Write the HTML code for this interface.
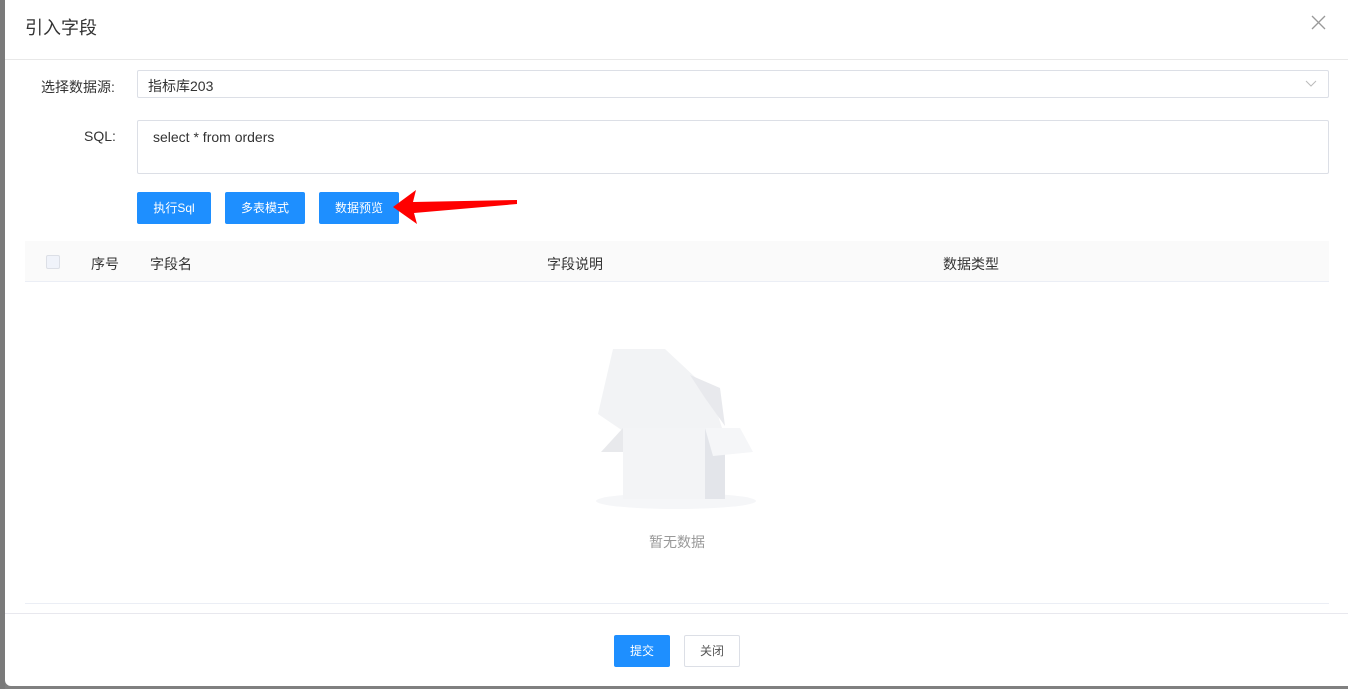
<!DOCTYPE html>
<html><head><meta charset="utf-8"><style>
*{box-sizing:border-box;margin:0;padding:0}
body{width:1348px;height:689px;background:#808080;position:relative;overflow:hidden;font-family:"Liberation Sans","Noto Sans CJK SC",sans-serif;font-size:14px;color:#333}
.modal{position:absolute;left:5px;top:-6px;width:1350px;height:692px;background:#fff;border-radius:6px}
.a{position:absolute}
.btn{position:absolute;height:32px;background:#1e8fff;color:#fff;font-size:12px;text-align:center;line-height:32px;border-radius:2px}
</style></head><body>
<div class="a" style="left:0;top:0;width:5px;height:689px;background:#7a7a7a"></div>
<div class="modal"></div>
<div class="a" style="left:25px;top:14px;font-size:18px;color:#333">引入字段</div>
<svg class="a" style="left:1311px;top:15px" width="15" height="15"><path d="M1 1L14 14M14 1L1 14" stroke="#999" stroke-width="1.3"/></svg>
<div class="a" style="left:5px;top:59px;width:1343px;height:1px;background:#e8e8e8"></div>
<div class="a" style="left:41px;top:77px;">选择数据源:</div>
<div class="a" style="left:137px;top:70px;width:1192px;height:28px;border:1px solid #dcdfe6;border-radius:2px;padding:5px 10px;">指标库203</div>
<svg class="a" style="left:1305px;top:80px" width="12" height="8"><path d="M1 1L6 6L11 1" stroke="#bbb" fill="none"/></svg>
<div class="a" style="left:84px;top:128px;">SQL:</div>
<div class="a" style="left:137px;top:120px;width:1192px;height:54px;border:1px solid #dcdfe6;border-radius:2px;padding:8px 15px;">select * from orders</div>
<div class="btn" style="left:137px;top:192px;width:74px">执行Sql</div>
<div class="btn" style="left:225px;top:192px;width:80px">多表模式</div>
<div class="btn" style="left:319px;top:192px;width:80px">数据预览</div>
<svg class="a" style="left:390px;top:188px" width="130" height="40"><path d="M3 19L26 2L23 14L127 12L127 16L24 25L27 36Z" fill="#f00"/></svg>
<div class="a" style="left:25px;top:241px;width:1304px;height:41px;background:#fafafa;border-bottom:1px solid #ebeef5"></div>
<div class="a" style="left:46px;top:255px;width:14px;height:14px;border:1px solid #dcdfe6;background:#f0f3fa;border-radius:2px"></div>
<div class="a" style="left:91px;top:254px">序号</div>
<div class="a" style="left:150px;top:254px">字段名</div>
<div class="a" style="left:547px;top:254px">字段说明</div>
<div class="a" style="left:943px;top:254px">数据类型</div>
<svg class="a" style="left:595px;top:348px" width="162" height="165">
<ellipse cx="81" cy="153" rx="80" ry="8" fill="#f5f6f8"/>
<path d="M18 1L70 1L115 43L128 83L28 83L3 66Z" fill="#f2f3f5"/>
<path d="M95 27L125 40L130 78L110 50Z" fill="#e8e9ed"/>
<path d="M28 80L110 80L110 151L28 151Z" fill="#f3f4f6"/>
<path d="M110 80L130 80L130 151L110 151Z" fill="#e3e5ea"/>
<path d="M28 80L6 104L28 104Z" fill="#e8e9ec"/>
<path d="M110 80L145 80L158 104L118 108Z" fill="#f5f6f8"/>
</svg>
<div class="a" style="left:649px;top:532px;color:#999">暂无数据</div>
<div class="a" style="left:25px;top:603px;width:1304px;height:1px;background:#ebeef5"></div>
<div class="a" style="left:5px;top:613px;width:1343px;height:1px;background:#e8e8ee"></div>
<div class="btn" style="left:614px;top:635px;width:56px;height:32px">提交</div>
<div class="a" style="left:684px;top:635px;width:56px;height:32px;border:1px solid #dcdfe6;border-radius:2px;font-size:12px;text-align:center;line-height:30px;color:#555">关闭</div>
</body></html>
